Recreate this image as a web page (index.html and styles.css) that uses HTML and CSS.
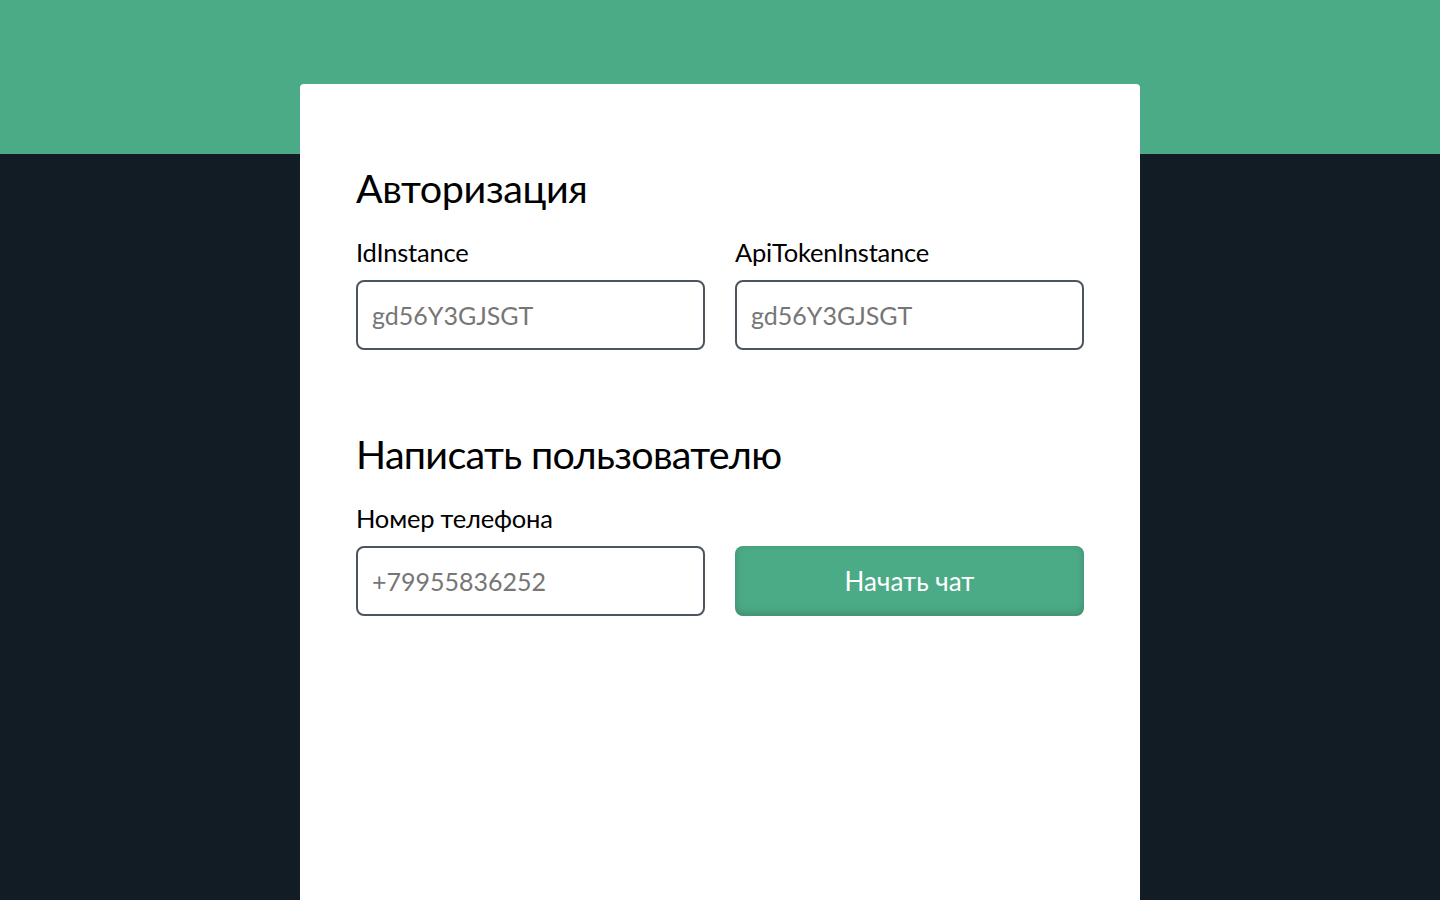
FILE: index.html
```html
<!DOCTYPE html>
<html lang="ru">
<head>
<meta charset="utf-8">
<title>Авторизация</title>
<link rel="stylesheet" href="styles.css">
</head>
<body>
<div class="top-band"></div>
<main class="card">
  <section class="block">
    <h2 class="title">Авторизация</h2>
    <div class="row">
      <label class="field">
        <span class="label">IdInstance</span>
        <input class="input" type="text" placeholder="gd56Y3GJSGT">
      </label>
      <label class="field">
        <span class="label">ApiTokenInstance</span>
        <input class="input" type="text" placeholder="gd56Y3GJSGT">
      </label>
    </div>
  </section>
  <section class="block block-second">
    <h2 class="title">Написать пользователю</h2>
    <div class="row">
      <label class="field">
        <span class="label">Номер телефона</span>
        <input class="input" type="text" placeholder="+79955836252">
      </label>
      <div class="field field-end">
        <button class="btn" type="button">Начать чат</button>
      </div>
    </div>
  </section>
</main>
</body>
</html>
```

FILE: styles.css
```css
* { box-sizing: border-box; }
html, body {
  margin: 0;
  padding: 0;
  height: 100%;
}
body {
  background: #111c24;
  font-family: "Lato", "Noto Sans", sans-serif;
  color: #000;
  overflow: hidden;
}
.top-band {
  height: 154px;
  background: #4cab87;
  margin-bottom: -70px;
}
.card {
  width: 840px;
  margin: 0 auto;
  min-height: 816px;
  background: #fff;
  border-radius: 4px 4px 0 0;
  padding: 80px 56px 0;
}
.title {
  margin: 0;
  font-size: 39.5px;
  font-weight: 400;
  line-height: 48px;
  letter-spacing: -0.4px;
}
.block-second .title { letter-spacing: -0.7px; }
.block-second { margin-top: 80px; }
.row {
  display: grid;
  grid-template-columns: minmax(0, 1fr) minmax(0, 1fr);
  column-gap: 30px;
  margin-top: 25px;
}
.field {
  display: flex;
  flex-direction: column;
  min-width: 0;
}
.field-end { justify-content: flex-end; }
.label {
  font-size: 25.5px;
  line-height: 30px;
  margin-bottom: 13px;
  letter-spacing: -0.2px;
}
.input {
  width: 100%;
  height: 70px;
  border: 2px solid #4a5560;
  border-radius: 8px;
  padding: 0 14px;
  font-family: inherit;
  font-size: 25px;
  color: #333;
  outline: none;
  background: #fff;
}
.input::placeholder { color: #767676; }
.btn {
  width: 100%;
  height: 70px;
  border: none;
  border-radius: 8px;
  background: #4cab87;
  color: #fff;
  font-family: inherit;
  font-size: 26px;
  box-shadow: inset 0 -4px 8px rgba(0,0,0,0.12), inset 0 0 6px rgba(0,0,0,0.08);
}
```
